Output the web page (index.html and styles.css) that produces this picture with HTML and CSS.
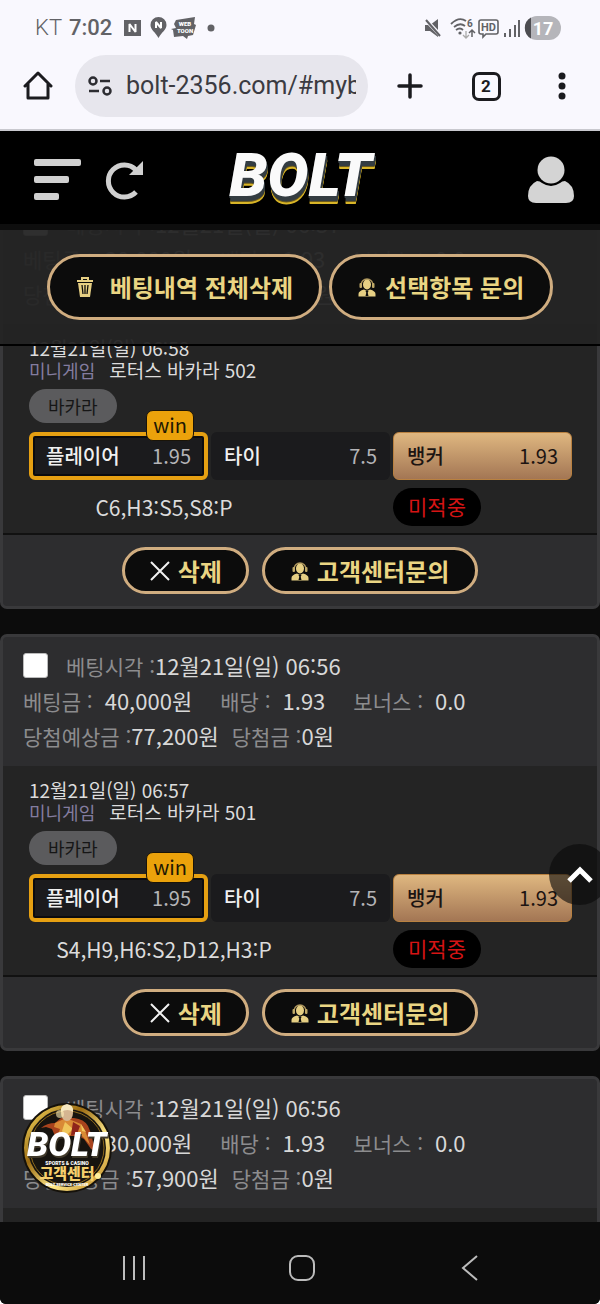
FILE: index.html
```html
<!DOCTYPE html>
<html lang="ko">
<head>
<meta charset="utf-8">
<meta name="viewport" content="width=device-width, initial-scale=1">
<title>BOLT 베팅내역</title>
<link rel="stylesheet" href="styles.css">
</head>
<body>
<svg class="defs" aria-hidden="true">
  <defs>
    <linearGradient id="gold" x1="0" y1="0" x2="1" y2="1">
      <stop offset="0" stop-color="#f9dc60"/><stop offset=".35" stop-color="#9b6b12"/><stop offset=".65" stop-color="#ffe98a"/><stop offset="1" stop-color="#b87d14"/>
    </linearGradient>
    <symbol id="agent" viewBox="0 0 18 20">
      <path d="M3 8a6 6 0 0 1 12 0" fill="none" stroke="#a8915a" stroke-width="1.500"/>
      <rect x="1.500" y="6" width="2.500" height="5" rx="1" fill="#bfa968"/><rect x="14" y="6" width="2.500" height="5" rx="1" fill="#bfa968"/>
      <ellipse cx="9" cy="7.500" rx="4" ry="5" fill="#e6cf83"/>
      <path d="M.5 19.500v-2.500q0-3 5.500-4.500l3 1.500 3-1.500q5.500 1.500 5.500 4.500v2.500z" fill="#e6cf83"/>
      <path d="M7.500 14h3l-.8 1.800.8 3.200h-3l.8-3.200z" fill="#0c0c0c"/>
    </symbol>
  </defs>
</svg>
<div class="app">
  <div class="browser">
    <div class="status">
      <span class="carrier">KT</span><span class="clock">7:02</span>
      <svg class="status-left" width="98" height="24" viewBox="0 0 98 24">
        <rect x="1" y="4" width="17" height="16" fill="#626266"/>
        <path d="M6.500 16V8l6 8V8" fill="none" stroke="#fff" stroke-width="2" stroke-linejoin="bevel"/>
        <path d="M35.500 1a8 8 0 0 1 8 8c0 5-5 7-8 13-3-6-8-8-8-13a8 8 0 0 1 8-8z" fill="#626266"/>
        <path d="M33 12V6l5 6V6" fill="none" stroke="#fff" stroke-width="2" stroke-linejoin="bevel"/>
        <path d="M53 4l19-3-1 7 2 1-3 10-5 1-1 3-4-3-9 1-1-7-2-1 5-1-2-4z" fill="#626266"/>
        <text x="62" y="10" font-size="6" class="tiny">WEB</text><text x="62" y="17" font-size="6" class="tiny">TOON</text>
        <circle cx="88" cy="12" r="3.500" fill="#626266"/>
      </svg>
      <svg class="status-right" width="138" height="26" viewBox="0 0 138 26">
        <path d="M1 10h5l8-6v18l-8-6H1z" fill="#626266"/><path d="M1 4l17 18" stroke="#f9f8fe" stroke-width="4"/><path d="M2 5l14 16" stroke="#626266" stroke-width="2"/>
        <g fill="none" stroke="#626266" stroke-width="1.800"><path d="M27 9q8-8 15-3M30 12q6-5 11-1M32 15q4-3 7 0"/><path d="M42 16v6m-3-2l3 3 3-3" stroke="#aaa" stroke-width="1.300"/><path d="M48 22v-6m-3 2l3-3 3 3" stroke-width="1.500"/></g>
        <circle cx="36" cy="18" r="1.600" fill="#626266"/><text x="43" y="12" font-size="10" class="badge-text">6</text>
        <path d="M57 5h15q2 0 2 2v10q0 2-2 2H62l-3 3v-3h-2q-2 0-2-2V7q0-2 2-2z" fill="none" stroke="#626266" stroke-width="1.600"/>
        <text x="64.500" y="16" font-size="11" text-anchor="middle" class="badge-text">HD</text>
        <path d="M81 18v4M86 14v8M91 10v12M95 5v17" stroke="#626266" stroke-width="2"/>
        <rect x="101" y="1" width="36" height="24" rx="12" fill="#b5b5ba"/><path d="M107 2.500v21a12 12 0 0 1 0-21z" fill="#4d4d51"/>
        <text x="119" y="20" font-size="18" text-anchor="middle" class="battery">17</text>
      </svg>
    </div>
    <div class="address-row">
      <button class="home" aria-label="홈"><svg width="30" height="30" viewBox="0 0 30 30"><path d="M2 15L15 2l13 13M5 13v14h20V13" fill="none" stroke="#1b1b1f" stroke-width="3" stroke-linejoin="round" stroke-linecap="round"/></svg></button>
      <label class="omnibox">
        <svg width="26" height="22" viewBox="0 0 26 22" fill="none" stroke="#2c2c31" stroke-width="2.500"><circle cx="6" cy="6" r="3.500"/><path d="M13 6h10M2 16h10"/><circle cx="20" cy="16" r="3.500"/></svg>
        <input type="text" value="bolt-2356.com/#mybet" aria-label="주소">
      </label>
      <div class="tools">
        <button aria-label="새 탭"><svg width="28" height="28" viewBox="0 0 28 28"><path d="M14 3v22M3 14h22" stroke="#1b1b1f" stroke-width="3.500" stroke-linecap="round"/></svg></button>
        <button aria-label="탭 2개"><span class="tabs">2</span></button>
        <button aria-label="메뉴"><svg width="8" height="28" viewBox="0 0 8 28" fill="#1b1b1f"><circle cx="4" cy="4" r="3.500"/><circle cx="4" cy="14" r="3.500"/><circle cx="4" cy="24" r="3.500"/></svg></button>
      </div>
    </div>
  </div>

  <header class="site">
    <div class="site-left">
      <button aria-label="전체 메뉴"><svg width="48" height="42" viewBox="0 0 48 42" fill="#d0d0d0"><rect y="0" width="47" height="7" rx="2"/><rect y="17" width="35" height="7" rx="2"/><rect y="34" width="25" height="7" rx="2"/></svg></button>
      <button aria-label="새로고침"><svg width="40" height="40" viewBox="0 0 40 40"><path d="M31 32a16 16 0 1 1 0-22" fill="none" stroke="#d0d0d0" stroke-width="5"/><path d="M38 1v14H24z" fill="#d0d0d0"/></svg></button>
    </div>
    <a class="logo" href="#">BOLT</a>
    <button class="user" aria-label="내 정보"><svg width="48" height="48" viewBox="0 0 48 48" fill="#d4d4d4"><circle cx="24" cy="14" r="13.500"/><path d="M10 25q3 0 5 2 9 6 18 0 2-2 5-2 9 4 9 15 0 7-8 7H9q-8 0-8-7 0-11 9-15z"/></svg></button>
  </header>

  <div class="bulk">
    <button class="pill large wide"><svg width="18" height="20" viewBox="0 0 18 20"><path d="M1 4h16M6 3V1h6v2" fill="none" stroke="#e6cf83" stroke-width="2"/><path d="M2 6h14l-2 14H4z" fill="#e6cf83"/><path d="M6 8l1 9M9 8v9M12 8l-1 9" stroke="#0c0c0c" stroke-width="1.300"/></svg>베팅내역 전체삭제</button>
    <button class="pill large"><svg width="18" height="20"><use href="#agent"/></svg>선택항목 문의</button>
  </div>

  <main class="history">
    <div class="list">
      <article class="card">
        <div class="summary">
          <div class="line check"><input type="checkbox" id="bet1"><label for="bet1">베팅시각 :<b>12월21일(일) 06:57</b></label></div>
          <div class="line spaced"><span>베팅금 :<b>30,000원</b></span><span>배당 :<b>1.93</b></span><span>보너스 :<b>0.0</b></span></div>
          <div class="line"><span>당첨예상금 :<b>57,900원</b></span><span>당첨금 :<b>0원</b></span></div>
        </div>
        <div class="detail">
          <div class="when">12월21일(일) 06:58</div>
          <div class="game"><span class="kind">미니게임</span><span>로터스 바카라 502</span></div>
          <span class="tag">바카라</span>
          <div class="picks">
            <button class="pick won"><b>플레이어</b><span>1.95</span><i class="win">win</i></button>
            <button class="pick"><b>타이</b><span>7.5</span></button>
            <button class="pick mine"><b>뱅커</b><span>1.93</span></button>
          </div>
          <div class="outcome"><span class="cards">C6,H3:S5,S8:P</span><span class="miss">미적중</span></div>
        </div>
        <div class="actions">
          <button class="pill"><svg width="22" height="22" viewBox="0 0 22 22"><path d="M2 2l18 18M20 2L2 20" stroke="#f2f2f2" stroke-width="2"/></svg>삭제</button>
          <button class="pill ask"><svg width="18" height="20"><use href="#agent"/></svg>고객센터문의</button>
        </div>
      </article>

      <article class="card">
        <div class="summary">
          <div class="line check"><input type="checkbox" id="bet2"><label for="bet2">베팅시각 :<b>12월21일(일) 06:56</b></label></div>
          <div class="line spaced"><span>베팅금 :<b>40,000원</b></span><span>배당 :<b>1.93</b></span><span>보너스 :<b>0.0</b></span></div>
          <div class="line"><span>당첨예상금 :<b>77,200원</b></span><span>당첨금 :<b>0원</b></span></div>
        </div>
        <div class="detail">
          <div class="when">12월21일(일) 06:57</div>
          <div class="game"><span class="kind">미니게임</span><span>로터스 바카라 501</span></div>
          <span class="tag">바카라</span>
          <div class="picks">
            <button class="pick won"><b>플레이어</b><span>1.95</span><i class="win">win</i></button>
            <button class="pick"><b>타이</b><span>7.5</span></button>
            <button class="pick mine"><b>뱅커</b><span>1.93</span></button>
          </div>
          <div class="outcome"><span class="cards">S4,H9,H6:S2,D12,H3:P</span><span class="miss">미적중</span></div>
        </div>
        <div class="actions">
          <button class="pill"><svg width="22" height="22" viewBox="0 0 22 22"><path d="M2 2l18 18M20 2L2 20" stroke="#f2f2f2" stroke-width="2"/></svg>삭제</button>
          <button class="pill ask"><svg width="18" height="20"><use href="#agent"/></svg>고객센터문의</button>
        </div>
      </article>

      <article class="card">
        <div class="summary">
          <div class="line check"><input type="checkbox" id="bet3"><label for="bet3">베팅시각 :<b>12월21일(일) 06:56</b></label></div>
          <div class="line spaced"><span>베팅금 :<b>30,000원</b></span><span>배당 :<b>1.93</b></span><span>보너스 :<b>0.0</b></span></div>
          <div class="line"><span>당첨예상금 :<b>57,900원</b></span><span>당첨금 :<b>0원</b></span></div>
        </div>
        <div class="detail"></div>
      </article>
    </div>
    <button class="to-top" aria-label="맨 위로"><svg width="26" height="18" viewBox="0 0 26 18"><path d="M2 15L13 4l11 11" fill="none" stroke="#fff" stroke-width="5"/></svg></button>
    <a class="support" href="#" aria-label="고객센터">
      <svg width="92" height="92" viewBox="0 0 92 92">
        <circle cx="46" cy="46" r="45" fill="#15110a"/>
        <circle cx="46" cy="46" r="41" fill="#17140f" stroke="url(#gold)" stroke-width="4"/>
        <circle cx="46" cy="46" r="37" fill="none" stroke="#8c681c" stroke-width="1"/>
        <path d="M20 26q6-5 14-5l6-5h13q10 1 14 8 4 8 5 16l4 10-6-3-7-10-6-3H34l-3-7-6-2z" fill="#a8431d"/>
        <path d="M34 21l9-4 7 1 10 4 5 9 4 12-7-8-7-6-8 6H36l3-8-6-2z" fill="#d98a35"/>
        <path d="M44 20l8 7-8 8-3-6zM60 22l5 8-4-1z" fill="#f0c65b"/>
        <path d="M52 20l7 4-3 8-6 1z" fill="#8f241b"/>
        <ellipse cx="46" cy="11" rx="6" ry="8" fill="#d5b591"/><path d="M40 10q-1-7 6-8 7 1 6 8-5-4-12 0z" fill="#f6e7bf"/>
        <circle cx="39" cy="12" r="4" fill="#fff0b8" opacity=".6"/>
        <text x="6" y="54" font-size="34" class="support-logo">BOLT</text>
        <text x="46" y="63" font-size="5" class="tiny">SPORTS &amp; CASINO</text>
        <text x="46" y="77" text-anchor="middle" class="support-name">고객센터</text>
        <text x="46" y="84" font-size="4" class="tiny">BOLT SERVICE CENTER</text>
        <circle cx="77" cy="74" r="3" fill="#fff09c"/>
      </svg>
    </a>
  </main>

  <nav class="system">
    <button aria-label="최근 앱"><svg width="26" height="26" viewBox="0 0 26 26"><path d="M3 1v24M13 1v24M23 1v24" stroke="#bcbcbc" stroke-width="2"/></svg></button>
    <button aria-label="홈 화면"><svg width="28" height="26" viewBox="0 0 28 26"><rect x="2" y="1" width="24" height="24" rx="8" fill="none" stroke="#bcbcbc" stroke-width="2"/></svg></button>
    <button aria-label="뒤로"><svg width="18" height="26" viewBox="0 0 18 26"><path d="M16 1L2 13l14 12" fill="none" stroke="#bcbcbc" stroke-width="2"/></svg></button>
  </nav>
</div>
</body>
</html>
```
FILE: styles.css
```css
* { box-sizing: border-box; }
body { margin: 0; background: #fff; font-family: "Noto Sans CJK KR", sans-serif; }
button { margin: 0; padding: 0; border: 0; background: none; color: inherit; font: inherit; display: flex; align-items: center; justify-content: center; }
svg { display: block; flex: none; }
.defs { position: absolute; width: 0; height: 0; }
.app { display: flex; flex-direction: column; height: 100vh; overflow: hidden; background: #0c0c0c; border-radius: 0 0 6px 6px; }

.browser { background: #f9f8fe; border-bottom: 2px solid #c9c9cf; padding-bottom: 12px; }
.status { display: flex; align-items: center; height: 55px; padding: 0 38px 0 35px; color: #626266; font: 22px/26px Roboto, sans-serif; }
.carrier { font-weight: 300; margin-right: 7px; }
.clock { font-weight: 500; margin-right: 11px; }
.status-right { margin-left: auto; }
.tiny { fill: #fff; font-family: Roboto, sans-serif; font-weight: 900; text-anchor: middle; }
.badge-text { fill: #626266; font-family: Roboto, sans-serif; font-weight: 700; }
.battery { fill: #fff; font-family: Roboto, sans-serif; font-weight: 700; }
.address-row { display: flex; align-items: center; }
.home { width: 75px; height: 62px; }
.omnibox { flex: 1; min-width: 0; display: flex; align-items: center; gap: 13px; height: 62px; padding: 0 12px; border-radius: 31px; background: #e7e6ed; }
.omnibox input { flex: 1; min-width: 0; padding: 0; border: 0; outline: 0; background: none; color: #3b3b42; font: 25px/32px Roboto, sans-serif; }
.tools { display: flex; margin-left: 4px; }
.tools button { width: 76px; height: 62px; }
.tabs { width: 29px; height: 29px; border: 3px solid #1b1b1f; border-radius: 7px; color: #1b1b1f; font: 700 17px/23px Roboto, sans-serif; }

.site { position: relative; z-index: 2; display: grid; grid-template-columns: 1fr auto 1fr; align-items: center; height: 93px; padding: 4px 25px 0 34px; background: #000; flex: none; }
.site-left { display: flex; align-items: center; gap: 23px; }
.user { justify-self: end; }
.logo { padding: 0 8px 10px 0; color: #fafafa; text-decoration: none; font: italic 900 61px/64px Roboto, sans-serif; text-shadow: 0 1px #343d42, 0 2px #343d42, 1px 3px #343d42, 1px 4px #343d42, 1px 5px #343d42, 1px 6px #6d5b1c, 1px 7px #d9b527, 1px 8px #d9b527; }

.bulk { position: relative; z-index: 2; flex: none; display: flex; justify-content: center; gap: 7px; padding: 24px 0; border-top: 6px solid #0e0e0e; border-bottom: 2px solid #000; background: rgba(36, 36, 36, .95); }
.pill { height: 47px; padding: 0 24px; gap: 7px; border: 3px solid #d0ad80; border-radius: 33px; background: #0c0c0c; color: #ead583; font-weight: 700; font-size: 24px; line-height: 32px; white-space: nowrap; }
.pill.ask { padding: 0 26px; gap: 8px; }
.pill.large { height: 66px; padding: 0 26px; gap: 9px; }
.pill.wide { gap: 16px; }

.history { position: relative; flex: 1; min-height: 0; overflow: hidden; margin-top: -154px; }
.list { display: flex; flex-direction: column; gap: 25px; }
.card { border: 3px solid #39393b; border-radius: 7px; overflow: hidden; background: #2d2d2f; }
.summary { padding: 11px 20px 13px; color: #8c8c8e; font-size: 21px; }
.line { display: flex; align-items: center; gap: 13px; height: 35px; line-height: 35px; white-space: nowrap; }
.line b { color: #d8d8d8; font-weight: 400; font-size: 22px; }
.line.check { gap: 18px; }
.line.spaced { gap: 28px; }
.spaced b { margin-left: 12px; }
.check input { appearance: none; flex: none; width: 25px; height: 25px; margin: 0; border: 1px solid #bbb; border-radius: 3px; background: #fff; }
.detail { padding: 13px 25px 7px 26px; border-bottom: 2px solid #111; background: #242424; color: #dcdcdc; font-size: 19px; line-height: 22px; }
.game { display: flex; gap: 14px; }
.kind { color: #837c9f; font-size: 18px; }
.tag { display: block; width: max-content; height: 34px; margin-top: 8px; padding: 0 19px; border-radius: 17px; background: #5b5b5d; color: #161616; line-height: 34px; font-size: 18px; }
.picks { display: grid; grid-template-columns: repeat(3, 1fr); gap: 3px; margin-top: 9px; }
.pick { position: relative; justify-content: space-between; height: 48px; padding: 0 13px; border-radius: 6px; background: #1b1b1d; font-size: 20px; }
.pick b { font-weight: 500; color: #f0f0f0; }
.pick span { color: #b4b4b7; }
.pick.won { border: 4px solid #e6a012; box-shadow: inset 0 0 0 2px #0b0b0e; }
.pick.mine { border: 1px solid #b98140; background: linear-gradient(#dfb780, #a37654); }
.pick.mine b, .pick.mine span { color: #1c1412; }
.win { position: absolute; right: 10px; top: -26px; height: 31px; padding: 0 6px; border: 1px solid #1a1408; border-radius: 7px; background: #eba20b; color: #201703; font-style: normal; font-size: 20px; line-height: 28px; }
.outcome { display: grid; grid-template-columns: repeat(6, 1fr); column-gap: 3px; align-items: center; margin-top: 8px; font-size: 21px; }
.cards { grid-column: span 3; text-align: center; }
.miss { grid-column: 5 / span 2; justify-self: start; height: 38px; padding: 0 15px; border-radius: 19px; background: #000; color: #d51414; line-height: 37px; }
.actions { display: flex; justify-content: center; gap: 13px; padding: 12px 0; }

.to-top { position: absolute; right: -10px; bottom: 317px; width: 61px; height: 61px; border-radius: 50%; background: rgba(10, 10, 10, .62); }
.support { position: absolute; left: 21px; bottom: 28px; }
.support-logo { fill: #fff; font-family: Roboto, sans-serif; font-weight: 900; font-style: italic; filter: drop-shadow(1px 2px 0 #40392a); }
.support-name { fill: #f6cf6d; font-family: "Noto Sans CJK KR", sans-serif; font-weight: 900; font-size: 15px; }

.system { position: relative; flex: none; display: grid; grid-template-columns: repeat(3, 1fr); height: 82px; padding: 10px 46px 0 50px; background: #0c0c0c; }
```
